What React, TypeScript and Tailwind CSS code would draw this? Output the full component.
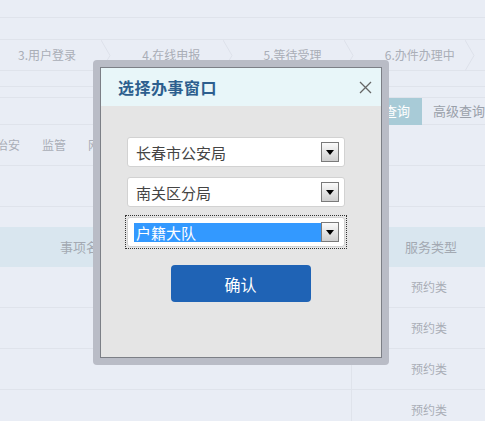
import React from 'react';

const font = { fontFamily: '"Noto Sans CJK SC", "Liberation Sans", sans-serif' };

const steps = ['3.用户登录', '4.在线申报', '5.等待受理', '6.办件办理中'];

const Arrow: React.FC = () => (
  <div className="w-[18px] h-[20px] border border-[#7a7a7a] bg-gradient-to-b from-[#fafafa] to-[#cfcfcf] flex items-center justify-center">
    <svg width="8" height="5" viewBox="0 0 8 5">
      <path d="M0 0 H8 L4 5 Z" fill="#000" />
    </svg>
  </div>
);

const SelectBox: React.FC<{ value: string; active?: boolean }> = ({ value, active }) => (
  <div className={active ? 'border border-dotted border-[#333] p-px' : 'border border-transparent p-px'}>
    <div className="h-[30px] bg-white border border-[#d2d2d2] rounded-[3px] flex items-center pl-[6px] pr-[5px]">
      <div
        className={`flex-1 h-[19px] flex items-center pl-[2px] text-[15px] leading-none ${
          active ? 'bg-[#3399ff] text-white' : 'text-[#444]'
        }`}
      >
        {value}
      </div>
      <Arrow />
    </div>
  </div>
);

const App: React.FC = () => {
  return (
    <div className="w-[485px] h-[421px] bg-[#e9edf5] relative overflow-hidden" style={font}>
      {/* Background page */}
      <div className="h-[18px] border-b border-[#dfe3eb]" />
      <div className="h-[22px] border-b border-[#dfe3eb]" />
      <div className="h-[31px] border-b border-[#dfe3eb] flex items-center">
        {steps.map((s, i) => (
          <div key={s} className="relative h-full flex items-center w-[122px] pl-[18px] text-[12px] text-[#a9aeb7]">
            <span className={i === 0 ? '' : 'ml-[3px]'}>{s}</span>
            <svg className="absolute right-[10px] top-0" width="10" height="31" viewBox="0 0 10 31">
              <path d="M0 0 L9 15.5 L0 31" fill="none" stroke="#dde1ea" strokeWidth="1" />
            </svg>
          </div>
        ))}
      </div>
      <div className="h-[16px] border-b border-[#dfe3eb]" />
      <div className="h-[11px] border-b border-[#dfe3eb]" />
      <div className="h-[27px] border-b border-[#dfe3eb] flex items-center">
        <div className="ml-[372px] w-[53px] h-[27px] bg-[#a8cbd7] text-white text-[13px] flex items-center justify-center">
          查询
        </div>
        <div className="ml-[11px] text-[13px] text-[#9aa0aa] whitespace-nowrap">高级查询</div>
      </div>
      <div className="h-[41px] border-b border-[#dfe3eb] flex items-center gap-[22px] text-[12px] text-[#a9aeb7] -ml-[4px]">
        <span>治安</span>
        <span>监管</span>
        <span>网络</span>
      </div>
      <div className="h-[41px] border-b border-[#dfe3eb]" />
      <div className="h-[20px]" />
      <div className="h-[40px] bg-[#d9e6ef] flex items-center text-[13px] text-[#a3a9b2]">
        <div className="w-[352px] pl-[60px]">事项名称</div>
        <div className="flex-1 pl-[53px]">服务类型</div>
      </div>
      {[0, 1, 2, 3].map((r) => (
        <div key={r} className="h-[41px] border-b border-[#dfe3eb] flex text-[12px] text-[#a9aeb7]">
          <div className="w-[352px] border-r border-[#dfe3eb]" />
          <div className="flex-1 flex items-center pl-[59px]">预约类</div>
        </div>
      ))}

      {/* Modal */}
      <div className="absolute left-[93px] top-[60px] w-[296px] h-[305px] bg-[#b9bcc6] rounded-[4px] p-[7px]">
        <div className="h-full border border-[#7c7f86] bg-[#e5e5e5] flex flex-col">
          <div className="h-[38px] bg-[#e8f6f9] flex items-center justify-between pl-[17px] pr-[9px]">
            <span className="text-[16px] font-bold text-[#2d5e8e] tracking-[0.5px]">选择办事窗口</span>
            <svg width="13" height="13" viewBox="0 0 13 13">
              <path d="M1 1 L12 12 M12 1 L1 12" stroke="#666" strokeWidth="1.3" />
            </svg>
          </div>
          <div className="flex flex-col gap-[6px] pt-[29px] pl-[24px] w-[246px]">
            <SelectBox value="长春市公安局" />
            <SelectBox value="南关区分局" />
            <SelectBox value="户籍大队" active />
          </div>
          <div className="flex justify-center mt-[16px]">
            <button className="w-[140px] h-[37px] bg-[#1f63b5] rounded-[4px] text-white text-[16px] -ml-[1px]">
              确认
            </button>
          </div>
        </div>
      </div>
    </div>
  );
};

export default App;
